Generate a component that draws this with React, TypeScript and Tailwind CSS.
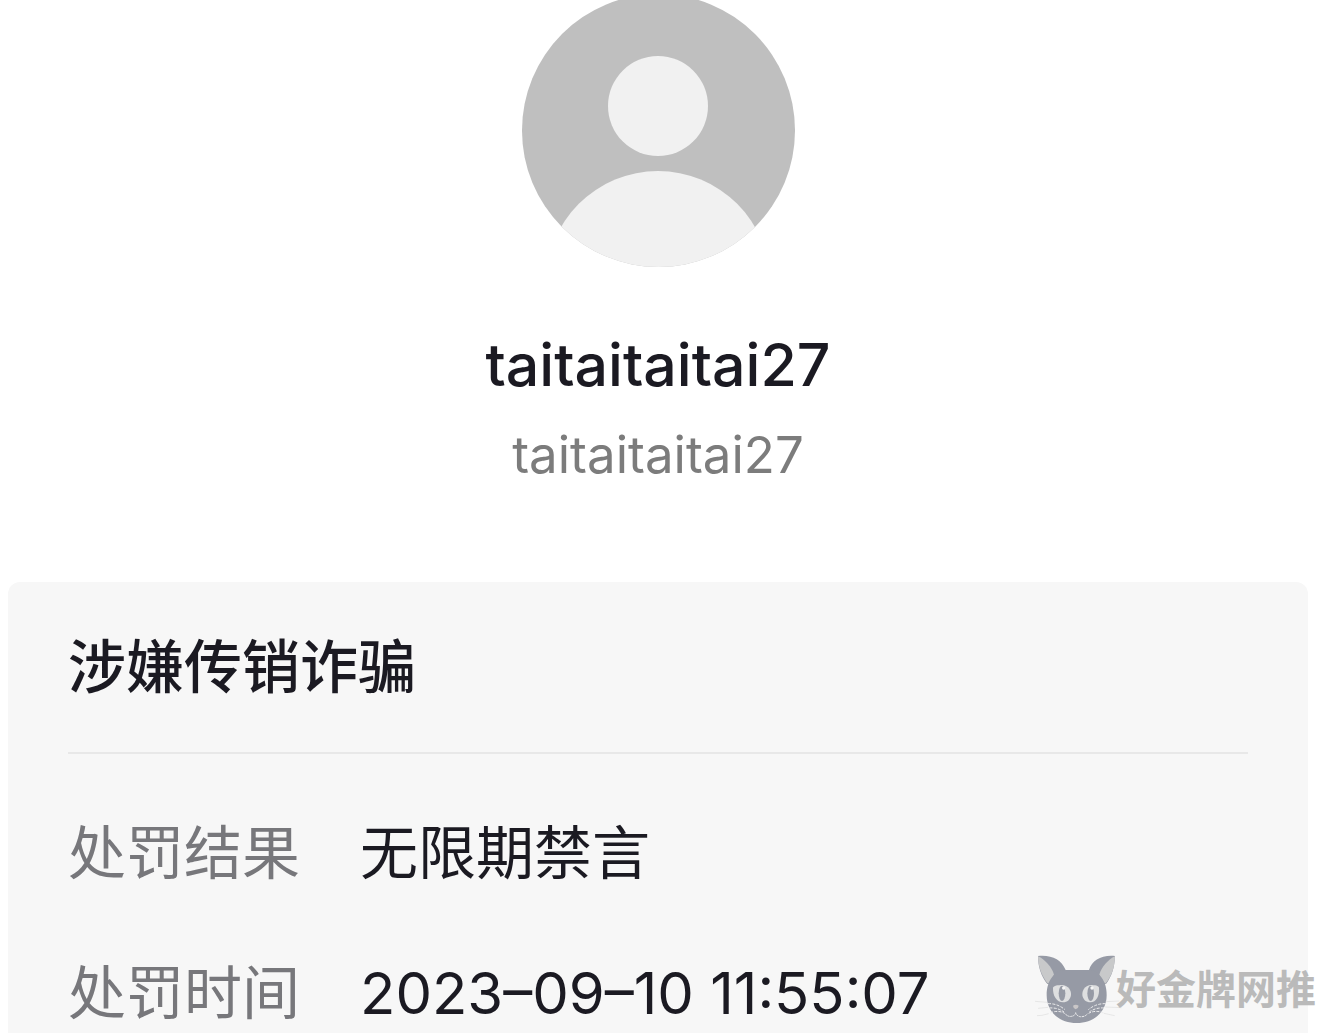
const details = [
    { label: '处罚结果', value: '无限期禁言' },
    { label: '处罚时间', value: '2023–09–10 11:55:07' },
]

function Avatar() {
    return (
        <svg viewBox="0 0 273 273" className="w-[273px] h-[273px] -mt-[6px]" aria-hidden="true">
            <defs>
                <clipPath id="avatar-clip">
                    <circle cx="136.5" cy="136.5" r="136.5" />
                </clipPath>
            </defs>
            <g clipPath="url(#avatar-clip)">
                <rect width="273" height="273" fill="#bfbfbf" />
                <circle cx="136" cy="112" r="50" fill="#f1f1f1" />
                <circle cx="136" cy="289" r="112" fill="#f1f1f1" />
            </g>
        </svg>
    )
}

function CatLogo() {
    return (
        <svg viewBox="45 45 261 207" className="w-[87px] h-[69px] -mr-[6px] shrink-0" aria-hidden="true">
            {/* Ears */}
            <path d="M54 48 C94 44 124 58 137 90 L207 90 C216 61 245 44 285 48 C284 82 275 110 258 132 L82 132 C63 109 54 79 54 48Z" fill="#969aa5" />
            <path d="M54 49 C74 58 96 82 102 104 C99 116 91 124 84 131 C64 108 55 80 54 49Z" fill="#c8c9ca" />
            <path d="M285 49 C265 58 244 82 238 104 C240 116 248 124 256 131 C276 108 284 80 285 49Z" fill="#c8c9ca" />
            {/* Head */}
            <path d="M102 104 C112 94 124 90 137 90 L207 90 C220 90 231 95 238 104 C254 122 260 140 260 166 C260 216 222 249 170 249 C117 249 80 215 80 166 C80 141 86 121 102 104Z" fill="#969aa5" />
            {/* Eyes */}
            <path d="M99 143 C101 137 113 135 128 135 C145 138 154 150 153 165 C151 179 142 187 129 187 C110 186 98 168 99 143Z" fill="#dedfe0" />
            <path d="M237 143 C236 137 225 135 211 135 C195 138 186 150 187 165 C189 179 198 187 211 187 C229 186 239 168 237 143Z" fill="#dedfe0" />
            <ellipse cx="126" cy="160" rx="10" ry="23" fill="#969aa5" />
            <ellipse cx="212" cy="160" rx="10" ry="23" fill="#969aa5" />
            <circle cx="131" cy="144" r="5" fill="#f5f5f5" />
            <circle cx="216" cy="144" r="5" fill="#f5f5f5" />
            {/* Nose and mouth */}
            <path d="M159 197 Q167 191 176 197 Q175 206 167 208 Q160 206 159 197Z" fill="#c9c6c7" />
            <g fill="none" stroke="#ededee" strokeWidth="3">
                <path d="M135 221 Q144 231 154 229 Q165 228 167 218 Q170 228 181 230 Q195 231 203 221" strokeDasharray="7 2" />
                <path d="M84 191 Q112 190 135 209 M88 204 Q112 202 132 216 M90 219 Q114 209 134 220" strokeDasharray="9 4" />
                <path d="M257 191 Q228 190 205 209 M252 204 Q228 202 208 216 M251 219 Q226 209 206 220" strokeDasharray="9 4" />
            </g>
            <g fill="none" stroke="#dedede" strokeWidth="2">
                <path d="M45 184 L82 187 M54 205 L84 202 M51 227 L66 226 L86 221" />
                <path d="M257 185 L298 183 M256 201 L305 203 M252 220 L284 227" />
            </g>
        </svg>
    )
}

export default function App() {
    return (
        <main className="relative min-h-screen flex flex-col overflow-hidden bg-white pl-2 pr-[21px] text-[#1b1a22] font-['Inter','Noto_Sans_CJK_SC',sans-serif]">
            <header className="flex flex-col items-center">
                <Avatar />
                <h1 className="mt-[58px] text-[59px] leading-[80px] font-medium">taitaitaitai27</h1>
                <p className="mt-5 text-[51px] leading-[60px] text-[#7c7c7c]">taitaitaitai27</p>
            </header>

            <section className="mt-[97px] flex-1 rounded-t-xl bg-[#f7f7f7] px-[60px] pt-[45px]">
                <h2 className="border-b-2 border-[#e8e8e8] pb-[45px] text-[58px] leading-[80px] font-medium">
                    涉嫌传销诈骗
                </h2>
                <dl className="mt-[59px] flex flex-col gap-[60px] text-[58px] leading-[80px]">
                    {details.map((item) => (
                        <div key={item.label} className="flex gap-[60px]">
                            <dt className="shrink-0 text-[#77777b]">{item.label}</dt>
                            <dd className="whitespace-nowrap">{item.value}</dd>
                        </div>
                    ))}
                </dl>
            </section>

            {/* Watermark */}
            <div className="absolute right-[13px] bottom-[9px] flex items-center">
                <CatLogo />
                <span className="text-[40px] leading-[40px] font-bold text-[#bababa]">好金牌网推</span>
            </div>
        </main>
    )
}
